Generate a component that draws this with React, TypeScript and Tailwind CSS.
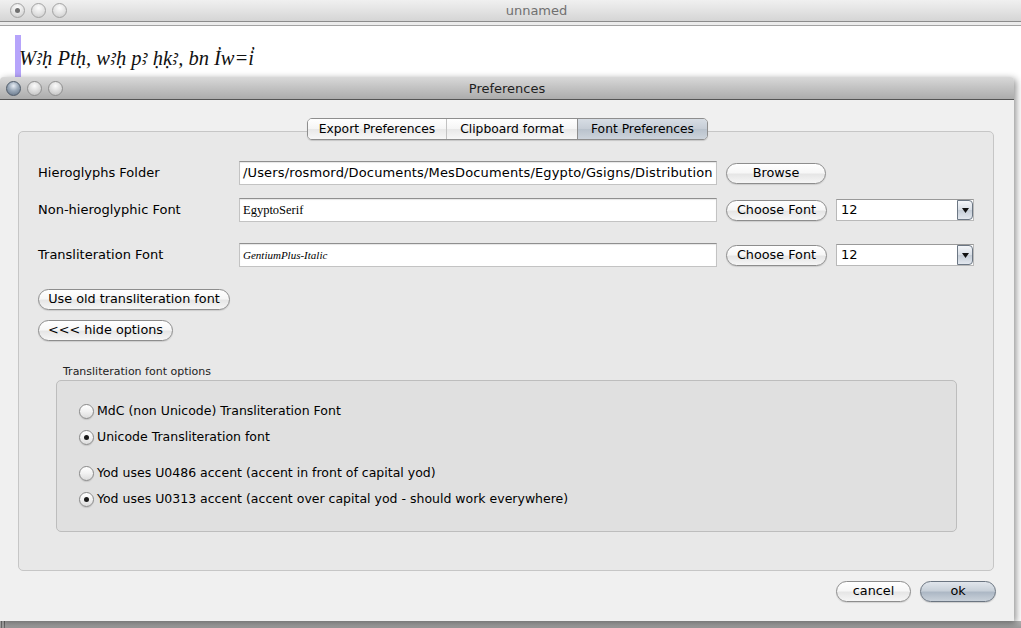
import React from "react";

const aquaBtn =
  "h-[21px] rounded-full border border-[#8d8d8d] bg-[linear-gradient(to_bottom,#ffffff_0%,#f7f7f7_45%,#e6e6e6_55%,#f6f6f6_100%)] shadow-[0_1px_1px_rgba(0,0,0,0.12)] text-[12.8px] text-black flex items-center justify-center leading-none shrink-0";

const field =
  "h-[24px] w-[478px] bg-white border border-[#c3c3c3] border-t-[#8f8f8f] shadow-[inset_0_1px_1px_rgba(0,0,0,0.10)] flex items-center pl-[3px] shrink-0 overflow-hidden whitespace-nowrap";

function Light({ kind, dot }: { kind: "gray" | "graphite" | "inactive"; dot?: boolean }) {
  const cls =
    kind === "graphite"
      ? "bg-[radial-gradient(circle_at_50%_30%,#e8eef5_0%,#9aa8b8_45%,#5f6f82_100%)] border-[#4f5b69]"
      : kind === "gray"
      ? "bg-[radial-gradient(circle_at_50%_30%,#fbfbfb_0%,#d8d8d8_55%,#b9b9b9_100%)] border-[#8f8f8f]"
      : "bg-[radial-gradient(circle_at_50%_30%,#fdfdfd_0%,#e2e2e2_55%,#c6c6c6_100%)] border-[#a3a3a3]";
  return (
    <div className={`w-[15px] h-[15px] rounded-full border flex items-center justify-center ${cls}`}>
      {dot && <div className="w-[5px] h-[5px] rounded-full bg-[#6f6f6f]" />}
    </div>
  );
}

function Radio({ checked, label }: { checked?: boolean; label: string }) {
  return (
    <div className="flex items-center h-[16px]">
      <div className="w-[15px] h-[15px] rounded-full border border-[#8a8a8a] bg-[linear-gradient(to_bottom,#ffffff_0%,#f1f1f1_50%,#dcdcdc_100%)] shadow-[0_1px_1px_rgba(0,0,0,0.12)] flex items-center justify-center shrink-0">
        {checked && <div className="w-[5px] h-[5px] rounded-full bg-[#1a1a1a]" />}
      </div>
      <span className="ml-[3px] text-[12.5px] text-black leading-none">{label}</span>
    </div>
  );
}

function Combo() {
  return (
    <div className="h-[22px] w-[138px] bg-white border border-[#b9b9b9] border-t-[#999] flex items-center shrink-0">
      <span className="pl-[4px] text-[13px] flex-1">12</span>
      <div className="h-[20px] w-[16px] rounded-r-[4px] border border-[#6c7784] bg-[linear-gradient(to_bottom,#f4f6f9_0%,#d8dee6_50%,#c5cdd7_51%,#e2e7ee_100%)] flex items-center justify-center">
        <svg width="7" height="5" viewBox="0 0 7 5">
          <path d="M0 0 L7 0 L3.5 5 Z" fill="#111" />
        </svg>
      </div>
    </div>
  );
}

export default function App() {
  return (
    <div className="relative w-[1021px] h-[628px] overflow-hidden bg-[#a6a6a6] font-['DejaVu_Sans',sans-serif] text-black">
      {/* Background document window */}
      <div className="absolute left-0 top-0 w-[1021px] h-[628px] flex flex-col bg-white">
        <div className="h-[22px] shrink-0 relative flex items-center bg-[linear-gradient(to_bottom,#f0f0f0_0%,#e3e3e3_50%,#d5d5d5_100%)] border-b border-[#8c8c8c]">
          <div className="flex items-center gap-[6px] pl-[10px]">
            <Light kind="inactive" dot />
            <Light kind="inactive" />
            <Light kind="inactive" />
          </div>
          <div className="absolute left-[0px] right-0 top-0 h-[21px] flex items-center justify-center pl-[52px] text-[13px] text-[#707070]">
            unnamed
          </div>
        </div>
        <div className="h-[4px] shrink-0 bg-[#ececec] border-b border-[#a3a3a3]" />
        <div className="relative flex-1 bg-white">
          <div className="absolute left-[15px] top-[9px] w-[6px] h-[44px] bg-[#b6a4fb]" />
          <div className="relative pl-[19px] pt-[19px] text-[20.5px] leading-[26px] italic font-['Liberation_Serif','DejaVu_Serif','Noto_Sans',serif] text-[#111]">
            W&#xA723;&#x1E25; Pt&#x1E25;, w&#xA723;&#x1E25; p&#xA723; &#x1E25;&#x1E33;&#xA723;, bn I&#x0313;w=i&#x0313;
          </div>
        </div>
        <div className="h-[7px] shrink-0 bg-[linear-gradient(to_bottom,#b3b3b3,#9a9a9a)] flex items-start pl-[1px] gap-[2px]">
          <div className="w-[1px] h-[7px] bg-[#6a6a6a]" />
          <div className="w-[1px] h-[7px] bg-[#6a6a6a]" />
        </div>
      </div>

      {/* Preferences window */}
      <div className="absolute left-0 top-[77px] w-[1014px] h-[544px] flex flex-col bg-[#f0f0f0] shadow-[2px_2px_7px_rgba(0,0,0,0.45)] rounded-t-[4px]">
        <div className="h-[23px] shrink-0 relative flex items-center rounded-t-[4px] bg-[linear-gradient(to_bottom,#d9d9d9_0%,#c4c4c4_45%,#acacac_100%)] border-b border-[#545454]">
          <div className="flex items-center gap-[6px] pl-[6px] pt-[1px]">
            <Light kind="graphite" />
            <Light kind="gray" />
            <Light kind="gray" />
          </div>
          <div className="absolute inset-0 pt-[1px] flex items-center justify-center text-[13px] text-[#1e1e1e]">
            Preferences
          </div>
        </div>

        <div className="flex-1 flex flex-col">
          {/* Tabs */}
          <div className="relative z-10 flex justify-center pt-[18px] pl-[1px]">
            <div className="flex h-[22px] rounded-[5px] border border-[#8e8e8e] overflow-hidden shadow-[0_1px_1px_rgba(0,0,0,0.15)] text-[12.3px]">
              <div className="w-[139px] flex items-center justify-center bg-[linear-gradient(to_bottom,#ffffff_0%,#f5f5f5_50%,#e8e8e8_51%,#f7f7f7_100%)] border-r border-[#c2c2c2]">
                Export Preferences
              </div>
              <div className="w-[131px] flex items-center justify-center bg-[linear-gradient(to_bottom,#ffffff_0%,#f5f5f5_50%,#e8e8e8_51%,#f7f7f7_100%)] border-r border-[#8e8e8e]">
                Clipboard format
              </div>
              <div className="w-[129px] flex items-center justify-center bg-[linear-gradient(to_bottom,#d7dde4_0%,#c6cdd6_50%,#b9c2cc_51%,#cdd4dc_100%)]">
                Font Preferences
              </div>
            </div>
          </div>

          {/* Pane */}
          <div className="mt-[-9px] ml-[18px] w-[976px] h-[440px] rounded-[5px] border border-[#c6c6c6] bg-[#e8e8e8] flex flex-col pl-[19px] pt-[29px]">
            <div className="flex items-center h-[24px]">
              <div className="w-[201px] text-[13px]">Hieroglyphs Folder</div>
              <div className={`${field} text-[13px] tracking-[0.15px]`}>/Users/rosmord/Documents/MesDocuments/Egypto/Gsigns/Distribution</div>
              <div className={`${aquaBtn} ml-[9px] w-[100px]`}>Browse</div>
            </div>
            <div className="flex items-center h-[24px] mt-[13px]">
              <div className="w-[201px] text-[13px]">Non-hieroglyphic Font</div>
              <div className={`${field} text-[12.5px] font-['Liberation_Serif',serif]`}>EgyptoSerif</div>
              <div className={`${aquaBtn} ml-[9px] w-[101px]`}>Choose Font</div>
              <div className="ml-[9px]">
                <Combo />
              </div>
            </div>
            <div className="flex items-center h-[24px] mt-[21px]">
              <div className="w-[201px] text-[13px]">Transliteration Font</div>
              <div className={`${field} text-[11px] italic font-['Liberation_Serif',serif]`}>GentiumPlus-Italic</div>
              <div className={`${aquaBtn} ml-[9px] w-[101px]`}>Choose Font</div>
              <div className="ml-[9px]">
                <Combo />
              </div>
            </div>
            <div className={`${aquaBtn} mt-[22px] w-[192px]`}>Use old transliteration font</div>
            <div className={`${aquaBtn} mt-[10px] w-[135px]`}>&lt;&lt;&lt; hide options</div>

            <div className="mt-[24px] ml-[25px] text-[11px] leading-[13px] text-[#222]">Transliteration font options</div>
            <div className="mt-[2px] ml-[18px] w-[901px] h-[152px] rounded-[5px] border border-[#bdbdbd] bg-[#e0e0e0] flex flex-col pl-[22px] pt-[22px]">
              <Radio label="MdC (non Unicode) Transliteration Font" />
              <div className="mt-[10px]">
                <Radio checked label="Unicode Transliteration font" />
              </div>
              <div className="mt-[20px]">
                <Radio label="Yod uses U0486 accent (accent in front of capital yod)" />
              </div>
              <div className="mt-[10px]">
                <Radio checked label="Yod uses U0313 accent (accent over capital yod - should work everywhere)" />
              </div>
            </div>
          </div>

          {/* Bottom buttons */}
          <div className="flex justify-end gap-[9px] pr-[18px] mt-[10px]">
            <div className={`${aquaBtn} w-[75px]`}>cancel</div>
            <div className="h-[21px] w-[76px] rounded-full border border-[#6b7581] bg-[linear-gradient(to_bottom,#e1e6ec_0%,#c8d0d9_45%,#adb8c5_55%,#c9d1da_100%)] shadow-[0_1px_1px_rgba(0,0,0,0.15)] text-[12.8px] flex items-center justify-center leading-none">
              ok
            </div>
          </div>
        </div>
      </div>
    </div>
  );
}
